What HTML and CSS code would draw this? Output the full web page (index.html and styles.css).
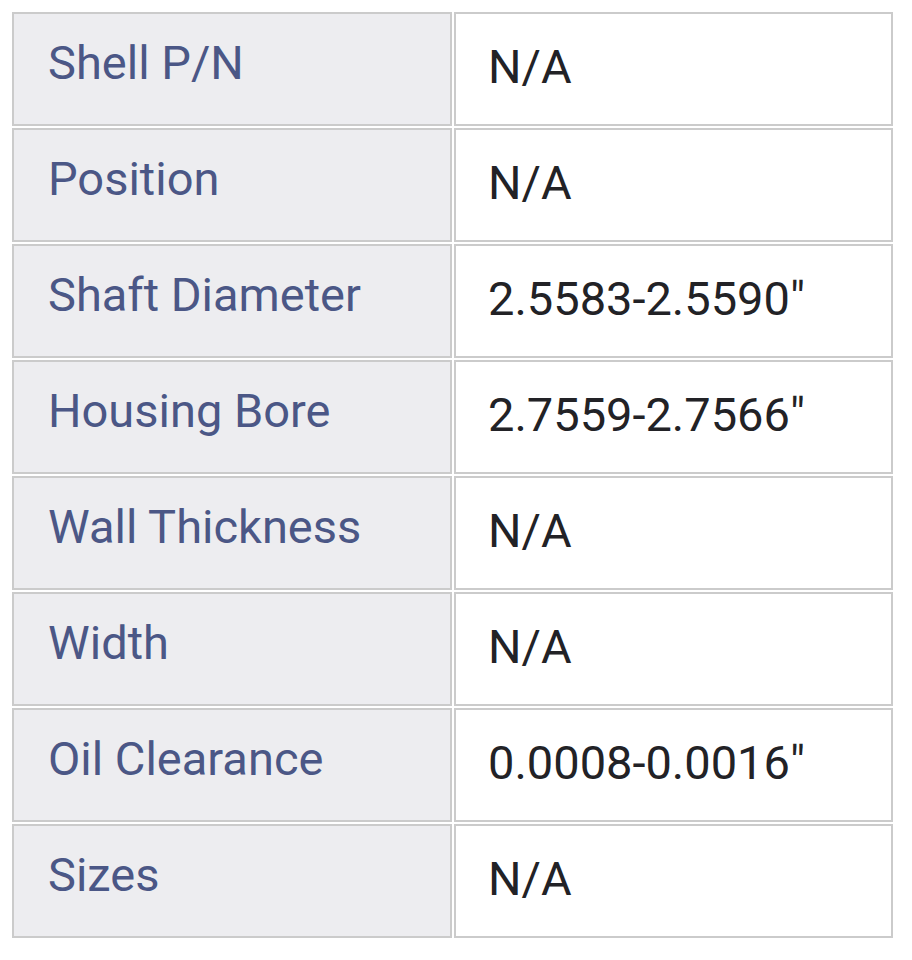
FILE: index.html
```html
<!DOCTYPE html>
<html>
<head>
<meta charset="utf-8">
<link rel="stylesheet" href="styles.css">
</head>
<body>
<table class="specs">
  <tbody>
    <tr><th class="label">Shell P/N</th><td class="value">N/A</td></tr>
    <tr><th class="label">Position</th><td class="value">N/A</td></tr>
    <tr><th class="label">Shaft Diameter</th><td class="value">2.5583-2.5590"</td></tr>
    <tr><th class="label">Housing Bore</th><td class="value">2.7559-2.7566"</td></tr>
    <tr><th class="label">Wall Thickness</th><td class="value">N/A</td></tr>
    <tr><th class="label">Width</th><td class="value">N/A</td></tr>
    <tr><th class="label">Oil Clearance</th><td class="value">0.0008-0.0016"</td></tr>
    <tr><th class="label">Sizes</th><td class="value">N/A</td></tr>
  </tbody>
</table>
</body>
</html>
```
FILE: styles.css
```css
html, body {
  margin: 0;
  padding: 0;
  background: #ffffff;
}
body {
  padding: 10px 0 0 10px;
}
.specs {
  border-collapse: separate;
  border-spacing: 2px;
  font-family: Roboto, "Liberation Sans", sans-serif;
  table-layout: fixed;
  width: 883px;
}
.label, .value {
  height: 114px;
  box-sizing: border-box;
  border: 2px solid #cbcbcb;
  text-align: left;
  vertical-align: middle;
  font-weight: 400;
  font-size: 47px;
}
.label {
  width: 440px;
  background: #ededf0;
  color: #4b5786;
  padding: 0 0 13px 34px;
}
.value {
  width: 439px;
  background: #ffffff;
  color: #222226;
  padding: 0 0 6px 32px;
}
```
